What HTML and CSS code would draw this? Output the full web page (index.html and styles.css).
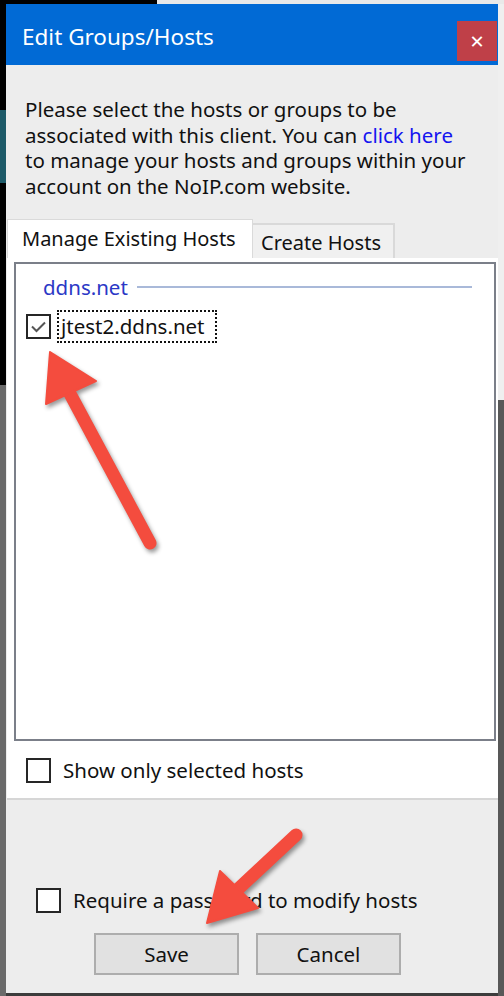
FILE: index.html
```html
<!DOCTYPE html>
<html lang="en">
<head>
<meta charset="UTF-8" />
<meta name="viewport" content="width=device-width, initial-scale=1" />
<title>Edit Groups/Hosts</title>
<link rel="stylesheet" href="styles.css">
</head>
<body>
<div class="dialog">
  <!-- Title bar -->
  <div class="titlebar">
    <span class="title">Edit Groups/Hosts</span>
    <button class="close" aria-label="Close">&#x2715;</button>
  </div>

  <div class="content">
    <p class="intro">Please select the hosts or groups to be associated with this client. You can <a href="#">click here</a> to manage your hosts and groups within your account on the NoIP.com website.</p>

    <!-- Tabs -->
    <div class="tabs">
      <div class="tab active">Manage Existing Hosts</div>
      <div class="tab">Create Hosts</div>
    </div>

    <div class="panel">
      <div class="listbox">
        <div class="group">
          <span class="group-name">ddns.net</span>
          <span class="group-line"></span>
        </div>
        <div class="item">
          <span class="check checked">
            <svg viewBox="0 0 21 21" width="21" height="21"><path d="M4 10.5 L8.5 15 L17 6.5" /></svg>
          </span>
          <span class="item-label">jtest2.ddns.net</span>
        </div>
      </div>
      <label class="option">
        <span class="check"></span>
        <span>Show only selected hosts</span>
      </label>
    </div>

    <div class="footer">
      <label class="option">
        <span class="check"></span>
        <span>Require a password to modify hosts</span>
      </label>
      <div class="buttons">
        <button class="btn">Save</button>
        <button class="btn">Cancel</button>
      </div>
    </div>
  </div>
</div>

<!-- Annotation arrows drawn over the dialog -->
<svg class="annotations" viewBox="0 0 504 996" aria-hidden="true">
  <g class="arrow">
    <line x1="68" y1="390" x2="150" y2="543" />
    <polygon points="50,352 46,404 96,381" />
  </g>
  <g class="arrow">
    <line x1="236" y1="891" x2="296" y2="835" />
    <polygon points="207,923 220,871 258,908" />
  </g>
</svg>
</body>
</html>
```
FILE: styles.css
```css
html, body {
  margin: 0;
  height: 100%;
}
body {
  position: relative;
  overflow: hidden;
  font-family: 'Noto Sans', 'Open Sans', sans-serif;
  color: #111;
  background:
    linear-gradient(to right, #000 157px, #e9e9e9 157px) top / 100% 4px no-repeat,
    linear-gradient(#000 110px, #1d5a68 110px 183px, #000 183px 385px, #6a6a6a 385px) left / 6px 100% no-repeat,
    linear-gradient(#efefef 400px, #585858 400px) right / 6px 100% no-repeat,
    #3c3c3c;
}

/* Dialog frame */
.dialog {
  margin: 4px 6px 0;
  width: 492px;
  height: 989px;
  display: flex;
  flex-direction: column;
  background: #ededed;
}
.titlebar {
  height: 61px;
  flex: none;
  display: flex;
  align-items: center;
  justify-content: space-between;
  background: #016ad5;
  color: #fff;
}
.title {
  font-size: 22.5px;
  padding-left: 16px;
  margin-top: 4px;
}
.close {
  align-self: flex-end;
  margin: 0 1px 4px 0;
  width: 40px;
  height: 40px;
  border: none;
  background: #bf4048;
  color: #fff;
  font-size: 18px;
  font-family: 'DejaVu Sans', sans-serif;
  padding: 0;
}

.content {
  flex: 1;
  display: flex;
  flex-direction: column;
}
.intro {
  margin: 0;
  padding: 32px 20px 0 19px;
  font-size: 20.5px;
  line-height: 25.5px;
}
.intro a {
  color: #1414f0;
  text-decoration: none;
}

/* Tabs */
.tabs {
  display: flex;
  align-items: flex-end;
  margin: 20px 0 0 1px;
  height: 39px;
}
.tab {
  box-sizing: border-box;
  font-size: 20px;
  display: flex;
  align-items: center;
}
.tab.active {
  width: 246px;
  height: 39px;
  padding: 0 0 2px 14px;
  background: #fff;
  border: 1px solid #dadada;
  border-bottom: none;
}
.tab:not(.active) {
  width: 142px;
  height: 35px;
  padding-left: 8px;
  padding-top: 2px;
  background: #f0f0f0;
  border: 2px solid #d9d9d9;
  border-bottom: none;
  border-left: none;
}

.panel {
  margin-left: 1px;
  height: 542px;
  background: #fff;
  border-bottom: 2px solid #d6d6d6;
  padding: 4px 2px 0 7px;
  box-sizing: border-box;
}
.listbox {
  height: 479px;
  border: 2px solid #7b7f89;
  box-sizing: border-box;
  padding: 10px 0 0 10px;
}
.group {
  display: flex;
  align-items: center;
  padding-left: 17px;
  height: 26px;
}
.group-name {
  font-size: 20.5px;
  color: #2b38c6;
}
.group-line {
  height: 2px;
  background: #a9b9d9;
  width: 335px;
  margin-left: 9px;
}
.item {
  display: flex;
  align-items: center;
  gap: 6px;
  margin-top: 10px;
}
.item-label {
  font-size: 20.5px;
  border: 2px dotted #111;
  padding: 0 10px 1px 2px;
  line-height: 28px;
}

/* Checkboxes */
.check {
  box-sizing: border-box;
  width: 25px;
  height: 25px;
  border: 2px solid #262626;
  background: #fff;
  flex: none;
  display: flex;
  align-items: center;
  justify-content: center;
}
.check svg path {
  fill: none;
  stroke: #555;
  stroke-width: 2;
}
.option {
  display: flex;
  align-items: center;
  gap: 12px;
  font-size: 20.5px;
}
.panel .option {
  margin: 15px 0 0 12px;
}

.footer {
  flex: 1;
  display: flex;
  flex-direction: column;
  padding: 86px 0 0 30px;
}
.buttons {
  display: flex;
  gap: 17px;
  margin: 19px 0 0 58px;
}
.btn {
  width: 145px;
  height: 42px;
  background: #e1e1e1;
  border: 2px solid #adadad;
  font-family: 'Noto Sans', 'Open Sans', sans-serif;
  font-size: 20.5px;
  color: #111;
  padding: 0;
}

/* Annotations */
.annotations {
  position: absolute;
  left: 0;
  top: 0;
  width: 504px;
  height: 996px;
  pointer-events: none;
}
.arrow {
  filter: drop-shadow(2px 3px 2px rgba(0,0,0,0.4));
}
.arrow line {
  stroke: #f44c3e;
  stroke-width: 13;
  stroke-linecap: round;
}
.arrow polygon {
  fill: #f44c3e;
  stroke: #f44c3e;
  stroke-width: 2;
  stroke-linejoin: round;
}
```
